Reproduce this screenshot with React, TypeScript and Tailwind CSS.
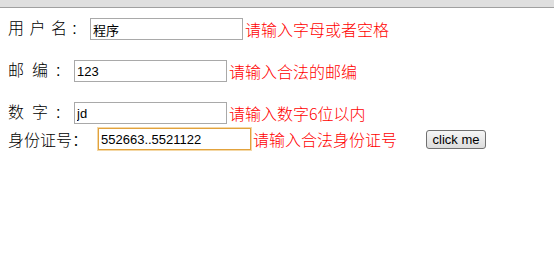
import React from "react";

const labelFont = "font-['Liberation_Sans','Noto_Sans_CJK_SC',sans-serif] font-light";
const inputCls =
  "h-[22px] w-[153px] border border-[#a9a9a9] bg-white px-[2px] text-[13px] text-black outline-none font-['Liberation_Sans','Noto_Sans_CJK_SC',sans-serif]";
const hintCls =
  "ml-[2px] whitespace-nowrap text-[16px] font-light leading-none text-[#ff0000] font-['Noto_Sans_CJK_SC','Liberation_Sans',sans-serif]";

export default function App() {
  return (
    <div className="min-h-[279px] w-[554px] bg-white text-black">
      <div className="h-[8px] border-b border-[#a0a0a0] bg-[#dfdfdf]" />
      <div className="pl-[8px]">
        <div className="mt-[10px] flex h-[22px] items-center">
          <span className={`w-[82px] whitespace-pre text-[16px] leading-none ${labelFont} [word-spacing:1px]`}>
            用 户 名 :
          </span>
          <input className={inputCls} defaultValue="程序" readOnly />
          <span className={hintCls}>请输入字母或者空格</span>
        </div>
        <div className="mt-[20px] flex h-[22px] items-center">
          <span className={`w-[66px] whitespace-pre text-[16px] leading-none ${labelFont} [word-spacing:3.5px]`}>
            邮 编 :
          </span>
          <input className={inputCls} defaultValue="123" readOnly />
          <span className={hintCls}>请输入合法的邮编</span>
        </div>
        <div className="mt-[20px] flex h-[22px] items-center">
          <span className={`w-[66px] whitespace-pre text-[16px] leading-none ${labelFont} [word-spacing:3.5px]`}>
            数 字 :
          </span>
          <input className={inputCls} defaultValue="jd" readOnly />
          <span className={hintCls}>请输入数字6位以内</span>
        </div>
        <div className="mt-[4px] flex h-[22px] items-center">
          <span className="w-[90px] whitespace-pre text-[16px] font-light leading-none font-['Noto_Sans_CJK_SC',sans-serif]">
            身份证号：
          </span>
          <input
            className="h-[22px] w-[153px] border border-[#e2a23c] bg-white px-[2px] text-[13px] text-black shadow-[0_0_0_1px_#f4d8a6] outline-none font-['Liberation_Sans',sans-serif]"
            defaultValue="552663..5521122"
            readOnly
          />
          <span className={hintCls}>请输入合法身份证号</span>
          <button className="ml-[29px] flex h-[19px] w-[60px] items-center justify-center rounded-[3px] border border-[#707070] bg-gradient-to-b from-[#f6f6f6] to-[#dcdcdc] text-[13px] leading-none text-black font-['Liberation_Sans',sans-serif]">
            click me
          </button>
        </div>
      </div>
    </div>
  );
}
